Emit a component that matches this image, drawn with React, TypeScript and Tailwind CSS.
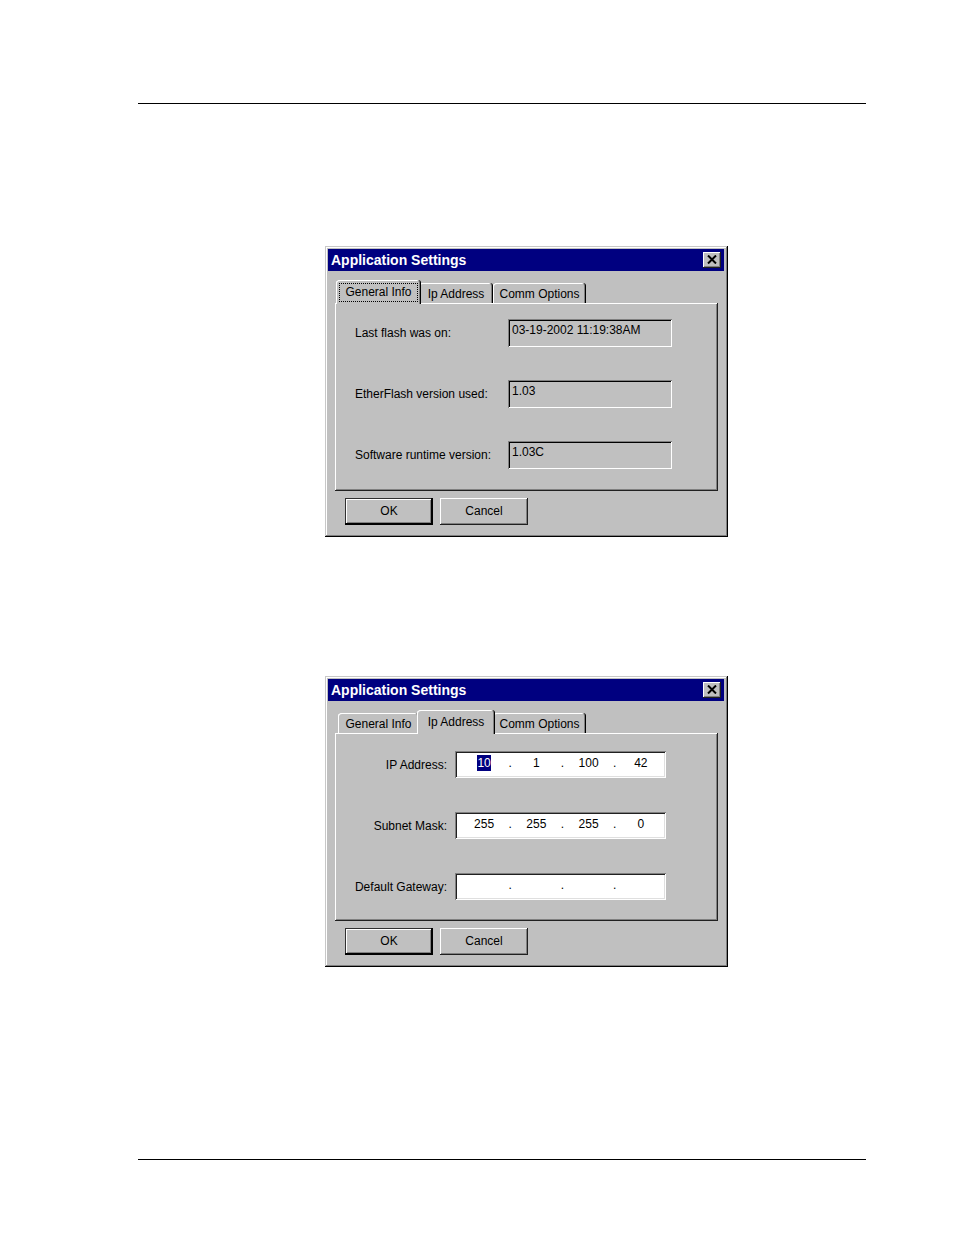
import React, { useEffect, useRef, useState } from 'react';
import { clsx } from 'clsx';

type TabId = 'general' | 'ip' | 'comm';

interface TabDef {
  id: TabId;
  label: string;
  width: string;
  selectedWidth: string;
}

const TABS: TabDef[] = [
  { id: 'general', label: 'General Info', width: 'w-[81px]', selectedWidth: 'w-[85px]' },
  { id: 'ip', label: 'Ip Address', width: 'w-[74px]', selectedWidth: 'w-[78px]' },
  { id: 'comm', label: 'Comm Options', width: 'w-[93px]', selectedWidth: 'w-[97px]' },
];

const GENERAL_INFO = [
  { label: 'Last flash was on:', value: '03-19-2002 11:19:38AM' },
  { label: 'EtherFlash version used:', value: '1.03' },
  { label: 'Software runtime version:', value: '1.03C' },
];

const ADDRESSES = [
  { label: 'IP Address:', octets: ['10', '1', '100', '42'] },
  { label: 'Subnet Mask:', octets: ['255', '255', '255', '0'] },
  { label: 'Default Gateway:', octets: ['', '', '', ''] },
];

// Raised edge shared by panels and buttons
const RAISED = 'shadow-[inset_-1px_-1px_0_#202020,inset_1px_1px_0_#fff,inset_-2px_-2px_0_#808080]';

interface IpFieldProps {
  id: string;
  label: string;
  initial: string[];
  selectFirst?: boolean;
}

const IpField: React.FC<IpFieldProps> = ({ id, label, initial, selectFirst = false }) => {
  const [octets, setOctets] = useState(initial);
  const firstRef = useRef<HTMLInputElement>(null);

  useEffect(() => {
    if (selectFirst && firstRef.current) {
      firstRef.current.focus({ preventScroll: true });
      firstRef.current.select();
    }
  }, [selectFirst]);

  const handleChange = (index: number, value: string) => {
    setOctets(octets.map((o, i) => (i === index ? value : o)));
  };

  return (
    <div className="flex items-center gap-2">
      <label htmlFor={`${id}-0`} className="w-28 text-right whitespace-nowrap">
        {label}
      </label>
      <div className="flex h-[27px] w-[211px] bg-white pr-px pb-1 pl-[5px] items-center shadow-[inset_1px_1px_0_#808080,inset_-1px_-1px_0_#fff,inset_2px_2px_0_#202020,inset_-2px_-2px_0_#dfdfdf]">
        {octets.map((octet, i) => (
          <React.Fragment key={i}>
            {i > 0 && <span className="w-1 text-center leading-4">.</span>}
            <input
              ref={i === 0 ? firstRef : undefined}
              id={`${id}-${i}`}
              aria-label={`${label} part ${i + 1}`}
              type="text"
              maxLength={3}
              value={octet}
              onChange={(e) => handleChange(i, e.target.value)}
              className="h-4 min-w-0 flex-1 bg-transparent text-center leading-4 outline-none caret-transparent selection:bg-[#000080] selection:text-white"
            />
          </React.Fragment>
        ))}
      </div>
    </div>
  );
};

interface SettingsDialogProps {
  id: string;
  initialTab: TabId;
  tabFocused?: boolean;
}

const SettingsDialog: React.FC<SettingsDialogProps> = ({ id, initialTab, tabFocused = false }) => {
  const [tab, setTab] = useState<TabId>(initialTab);

  return (
    <section
      role="dialog"
      aria-labelledby={`${id}-title`}
      className="w-full max-w-[403px] bg-[#c0c0c0] p-[3px] pb-3 text-xs text-black shadow-[inset_-1px_-1px_0_#000,inset_1px_1px_0_#c8c8c8,inset_-2px_-2px_0_#808080,inset_2px_2px_0_#fff]"
    >
      <div className="mr-px flex h-[22px] items-center justify-between bg-[#000080] px-[3px]">
        <h2 id={`${id}-title`} className="text-sm leading-5 font-bold text-white">
          Application Settings
        </h2>
        <button
          type="button"
          aria-label="Close"
          className={clsx('flex h-4 w-[18px] items-center justify-center bg-[#c0c0c0] pb-px', RAISED)}
        >
          <svg width="10" height="9" viewBox="0 0 10 9" fill="none" stroke="#000" strokeWidth="2">
            <path d="M1 0.5 L9 8.5 M9 0.5 L1 8.5" />
          </svg>
        </button>
      </div>

      <div className="mx-[7px] mt-[9px]">
        <div role="tablist" className="flex h-[23px] items-end pl-[3px]">
          {TABS.map((t) => {
            const selected = t.id === tab;
            return (
              <button
                key={t.id}
                type="button"
                role="tab"
                id={`${id}-tab-${t.id}`}
                aria-selected={selected}
                aria-controls={`${id}-panel`}
                onClick={() => setTab(t.id)}
                className={clsx(
                  'shrink-0 rounded-t-[3px] bg-[#c0c0c0] whitespace-nowrap outline-none',
                  'shadow-[inset_-1px_0_0_#000,inset_1px_1px_0_#fff,inset_-2px_0_0_#808080]',
                  selected
                    ? `relative z-10 -mx-0.5 -mb-px h-6 p-[3px] pb-0.5 ${t.selectedWidth}`
                    : `h-5 pt-0.5 ${t.width}`
                )}
              >
                {selected ? (
                  <span
                    className={clsx(
                      'flex h-[19px] items-center justify-center border border-dotted pb-0.5',
                      tabFocused ? 'border-black' : 'border-transparent'
                    )}
                  >
                    {t.label}
                  </span>
                ) : (
                  t.label
                )}
              </button>
            );
          })}
        </div>

        <div
          role="tabpanel"
          id={`${id}-panel`}
          aria-labelledby={`${id}-tab-${tab}`}
          className={clsx('min-h-[188px]', RAISED)}
        >
          {tab === 'general' && (
            <div className="flex flex-col gap-[33px] pt-4 pl-5">
              {GENERAL_INFO.map((row, i) => (
                <div key={row.label} className="flex items-center">
                  <label htmlFor={`${id}-info-${i}`} className="w-[153px] whitespace-nowrap">
                    {row.label}
                  </label>
                  <input
                    id={`${id}-info-${i}`}
                    type="text"
                    readOnly
                    value={row.value}
                    className="h-7 w-[164px] bg-[#c0c0c0] px-1 pb-1.5 outline-none shadow-[inset_1px_1px_0_#808080,inset_-1px_-1px_0_#fff,inset_2px_2px_0_#000]"
                  />
                </div>
              ))}
            </div>
          )}
          {tab === 'ip' && (
            <div className="flex flex-col gap-[34px] pt-[18px]">
              {ADDRESSES.map((row, i) => (
                <IpField
                  key={row.label}
                  id={`${id}-ip-${i}`}
                  label={row.label}
                  initial={row.octets}
                  selectFirst={i === 0}
                />
              ))}
            </div>
          )}
        </div>

        <div className="mt-[7px] flex gap-[7px] pl-[10px]">
          <button
            type="button"
            className="h-[27px] w-[88px] bg-[#c0c0c0] pb-0.5 shadow-[inset_-2px_-2px_0_#000,inset_0_0_0_1px_#303030,inset_2px_2px_0_#fff,inset_-3px_-3px_0_#808080]"
          >
            OK
          </button>
          <button type="button" className={clsx('h-[27px] w-[88px] bg-[#c0c0c0] pb-0.5', RAISED)}>
            Cancel
          </button>
        </div>
      </div>
    </section>
  );
};

const App: React.FC = () => {
  return (
    <div className="flex min-h-screen flex-col bg-white pr-[88px] pl-[138px] font-['Liberation_Sans',Arial,sans-serif]">
      <header className="h-[104px] border-b border-black" />
      <main className="flex flex-col gap-[139px] pt-[142px] pb-16 pl-[187px]">
        <SettingsDialog id="general-settings" initialTab="general" tabFocused />
        <SettingsDialog id="ip-settings" initialTab="ip" />
      </main>
      <footer className="mt-auto h-[76px] border-t border-black" />
    </div>
  );
};

export default App;
